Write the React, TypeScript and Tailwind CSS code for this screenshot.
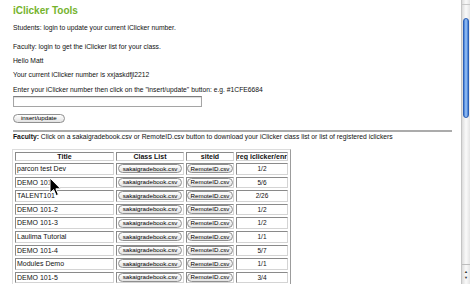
import React from "react";

const rows: [string, string][] = [
  ["parcon test Dev", "1/2"],
  ["DEMO 101", "5/6"],
  ["TALENT101", "2/26"],
  ["DEMO 101-2", "1/2"],
  ["DEMO 101-3", "1/2"],
  ["Laulima Tutorial", "1/1"],
  ["DEMO 101-4", "5/7"],
  ["Modules Demo", "1/1"],
  ["DEMO 101-5", "3/4"],
];

const cell =
  "border border-t-[#8a8a8a] border-l-[#8a8a8a] border-b-[#d4d4d4] border-r-[#d4d4d4] p-0";

function Pill({ label, pad = "px-[4px]" }: { label: string; pad?: string }) {
  return (
    <span
      className={`inline-flex items-center h-[9px] ${pad} rounded-full border border-[#8f8f8f] bg-gradient-to-b from-white to-[#e2e2e2] text-[6.2px] leading-none text-black`}
    >
      {label}
    </span>
  );
}

function Scrollbar() {
  return (
    <div className="w-[9px] h-full flex flex-col bg-gradient-to-r from-[#dcdcdc] via-[#fafafa] to-[#e4e4e4] border-l border-[#c4c4c4]">
      <div className="h-[5px] border-b border-[#c8c8c8] rounded-t-full" />
      <div className="flex-1 px-[1px]">
        <div className="mt-[13px] h-[100px] rounded-full border border-[#2c5fb4] bg-gradient-to-r from-[#3a78d6] via-[#a3c8f5] to-[#3a78d6]" />
      </div>
      <div className="h-[20px] border-t border-[#bdbdbd] flex flex-col items-center justify-center gap-[2px] text-[4px] leading-none text-[#333]">
        <span>▲</span>
        <span>▼</span>
      </div>
    </div>
  );
}

export default function App() {
  return (
    <div
      className="relative w-[470px] h-[284px] overflow-hidden flex bg-white text-[#111]"
      style={{ fontFamily: '"Liberation Sans", Arial, sans-serif' }}
    >
      <div className="flex-1 pl-[13px] pr-[9px] pt-[5px] text-[6.75px] leading-[10px]">
        <h1 className="text-[10px] leading-[12px] font-bold text-[#74b32d]">iClicker Tools</h1>
        <p className="mt-[6px]">Students: login to update your current iClicker number.</p>
        <p className="mt-[9px]">Faculty: login to get the iClicker list for your class.</p>
        <p className="mt-[4px]">Hello Matt</p>
        <p className="mt-[4px]">Your current iClicker number is xxjaskdfjl2212</p>
        <p className="mt-[5px]">
          Enter your iClicker number then click on the "insert/update" button: e.g. #1CFE6684
        </p>
        <input
          className="mt-[1px] block w-[189px] h-[11px] border border-[#a5a5a5] border-t-[#7d7d7d] shadow-[inset_0_1px_1px_rgba(0,0,0,0.15)] bg-white"
          type="text"
        />
        <div className="mt-[7px] h-[10px] flex">
          <Pill label="insert/update" pad="px-[7px]" />
        </div>
        <div className="mt-[6px] h-[2px] bg-[#ababab]" />
        <p>
          <b>Faculty:</b> Click on a sakaigradebook.csv or RemoteID.csv button to download your
          iClicker class list or list of registered iclickers
        </p>
        <table className="mt-[7px] ml-[-1px] w-[279px] table-fixed border-separate border-spacing-[2px] border border-t-[#dcdcdc] border-l-[#dcdcdc] border-b-[#9c9c9c] border-r-[#9c9c9c] text-[7px]">
          <thead>
            <tr className="h-[9px]">
              <th className={`${cell} w-[99px] font-bold leading-[7px]`}>Title</th>
              <th className={`${cell} w-[68px] font-bold leading-[7px]`}>Class List</th>
              <th className={`${cell} w-[48px] font-bold leading-[7px]`}>siteid</th>
              <th className={`${cell} w-[52px] font-bold leading-[7px] overflow-hidden whitespace-nowrap`}>
                reg iclicker/enr
              </th>
            </tr>
          </thead>
          <tbody>
            {rows.map(([title, reg]) => (
              <tr key={title} className="h-[11.6px]">
                <td className={`${cell} text-left leading-[9.6px] pl-[1px]`}>{title}</td>
                <td className={`${cell} text-center`}>
                  <div className="flex justify-center">
                    <Pill label="sakaigradebook.csv" />
                  </div>
                </td>
                <td className={`${cell} text-center`}>
                  <div className="flex justify-center">
                    <Pill label="RemoteID.csv" pad="px-[3px]" />
                  </div>
                </td>
                <td className={`${cell} text-center leading-[9.6px] text-[6.5px]`}>{reg}</td>
              </tr>
            ))}
          </tbody>
        </table>
      </div>
      <Scrollbar />
      <svg
        className="absolute left-[49px] top-[177px]"
        width="13"
        height="20"
        viewBox="0 0 13 20"
      >
        <path
          d="M1 1 L1 16 L4.6 12.6 L7.2 18.6 L9.4 17.6 L6.9 11.8 L11.6 11.8 Z"
          fill="#000"
          stroke="#fff"
          strokeWidth="1"
          strokeLinejoin="round"
        />
      </svg>
    </div>
  );
}
